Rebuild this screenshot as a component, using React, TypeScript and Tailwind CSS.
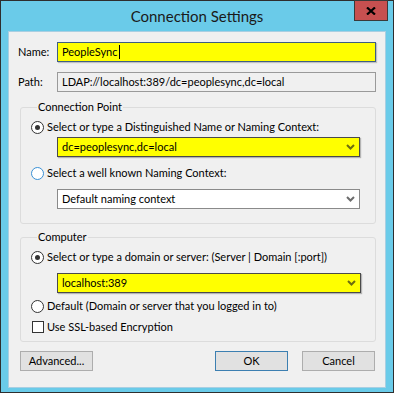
import React from "react";

const FONT = "font-['Lato','Noto_Sans',sans-serif]";

function Radio({ checked = false, hover = false }: { checked?: boolean; hover?: boolean }) {
  return (
    <span
      className={`flex h-[13px] w-[13px] shrink-0 items-center justify-center rounded-full border bg-white ${
        hover ? "border-[#3990d5]" : "border-[#333]"
      }`}
    >
      {checked && <span className="h-[5px] w-[5px] rounded-full bg-[#333]" />}
    </span>
  );
}

function Chevron({ color }: { color: string }) {
  return (
    <svg width="9" height="6" viewBox="0 0 9 6" aria-hidden>
      <path d="M1 1 L4.5 4.5 L8 1" fill="none" stroke={color} strokeWidth="2" />
    </svg>
  );
}

function Combo({ value, highlight = false, w = "w-[303px]" }: { value: string; highlight?: boolean; w?: string }) {
  return (
    <div
      className={`ml-[26px] flex h-[20px] ${w} items-center justify-between border pl-[4px] pr-[4px] ${
        highlight
          ? "border-[#4a4a4a] bg-[#ffff00] shadow-[1px_1px_1px_rgba(0,0,0,0.25)]"
          : "border-[#8a8a8a] bg-white"
      }`}
    >
      <span className="text-[11px] leading-[14px] text-black">{value}</span>
      <Chevron color={highlight ? "#6d6d10" : "#6d6d6d"} />
    </div>
  );
}

function RadioRow({ label, checked, hover, mt }: { label: string; checked?: boolean; hover?: boolean; mt: string }) {
  return (
    <div className={`${mt} flex h-[14px] items-center gap-[3px]`}>
      <Radio checked={checked} hover={hover} />
      <span className="text-[11px] leading-[14px] text-black">{label}</span>
    </div>
  );
}

export default function App() {
  return (
    <div className={`${FONT} flex h-[393px] w-[394px] flex-col border border-[#2e2e2e] bg-[#6acbe9]`}>
      {/* title bar */}
      <div className="relative flex h-[30px] shrink-0 items-center justify-center">
        <span className="text-[15px] leading-[18px] text-[#1a1a1a]">Connection Settings</span>
        <div className="absolute right-[5px] top-[-1px] flex h-[21px] w-[34px] items-center justify-center border border-[#3a3a3a] bg-[#c75050]">
          <svg width="10" height="8" viewBox="0 0 10 8" aria-hidden>
            <path d="M1 0.5 L9 7.5 M9 0.5 L1 7.5" stroke="#000" strokeWidth="2.2" />
          </svg>
        </div>
      </div>

      {/* client */}
      <div className="mx-[7px] mb-[4px] flex flex-1 flex-col border border-[#a9cfe2] bg-[#f0f0f0] px-[9px] pt-[10px] text-[11px] text-black">
        <div className="flex h-[20px] items-center">
          <span className="w-[39px] leading-[14px]">Name:</span>
          <div className="flex h-[20px] flex-1 items-center border border-[#3d5e82] bg-[#ffff00] pl-[4px] shadow-[1px_1px_1px_rgba(0,0,0,0.2)]">
            <span className="leading-[14px]">PeopleSync</span>
            <span className="ml-[1px] h-[14px] w-[1px] bg-black" />
          </div>
        </div>

        <div className="mt-[10px] flex h-[20px] items-center">
          <span className="w-[39px] leading-[14px]">Path:</span>
          <div className="flex h-[20px] flex-1 items-center border border-[#9a9a9a] bg-[#f0f0f0] pl-[4px]">
            <span className="leading-[14px]">LDAP://localhost:389/dc=peoplesync,dc=local</span>
          </div>
        </div>

        <fieldset className="ml-[2px] mt-[8px] rounded-[3px] border border-[#dcdcdc] pb-[14px] pl-[10px]">
          <legend className="ml-[6px] px-[1px] leading-[14px]">Connection Point</legend>
          <RadioRow mt="mt-[6px]" checked label="Select or type a Distinguished Name or Naming Context:" />
          <div className="mt-[3px]">
            <Combo value="dc=peoplesync,dc=local" highlight />
          </div>
          <RadioRow mt="mt-[9px]" hover label="Select a well known Naming Context:" />
          <div className="mt-[9px]">
            <Combo value="Default naming context" />
          </div>
        </fieldset>

        <fieldset className="ml-[2px] mt-[6px] rounded-[3px] border border-[#dcdcdc] pb-[7px] pl-[10px]">
          <legend className="ml-[6px] px-[1px] leading-[14px]">Computer</legend>
          <RadioRow mt="mt-[6px]" checked label="Select or type a domain or server: (Server | Domain [:port])" />
          <div className="mt-[9px]">
            <Combo value="localhost:389" highlight w="w-[304px]" />
          </div>
          <RadioRow mt="mt-[6px]" label="Default (Domain or server that you logged in to)" />
          <div className="mt-[7px] flex h-[14px] items-center gap-[3px]">
            <span className="ml-[1px] h-[12px] w-[12px] border border-[#333] bg-white" />
            <span className="leading-[14px]">Use SSL-based Encryption</span>
          </div>
        </fieldset>

        <div className="ml-[2px] mr-[1px] mt-[9px] flex items-center justify-between">
          <button className="flex h-[20px] w-[73px] items-center justify-center border border-[#adadad] bg-[#e1e1e1] text-[11px] leading-[14px]">
            Advanced...
          </button>
          <div className="flex gap-[14px]">
            <button className="flex h-[20px] w-[73px] items-center justify-center border border-[#3c7fb1] bg-[#e1e1e1] text-[11px] leading-[14px]">
              OK
            </button>
            <button className="flex h-[20px] w-[73px] items-center justify-center border border-[#adadad] bg-[#e1e1e1] text-[11px] leading-[14px]">
              Cancel
            </button>
          </div>
        </div>
      </div>
    </div>
  );
}
